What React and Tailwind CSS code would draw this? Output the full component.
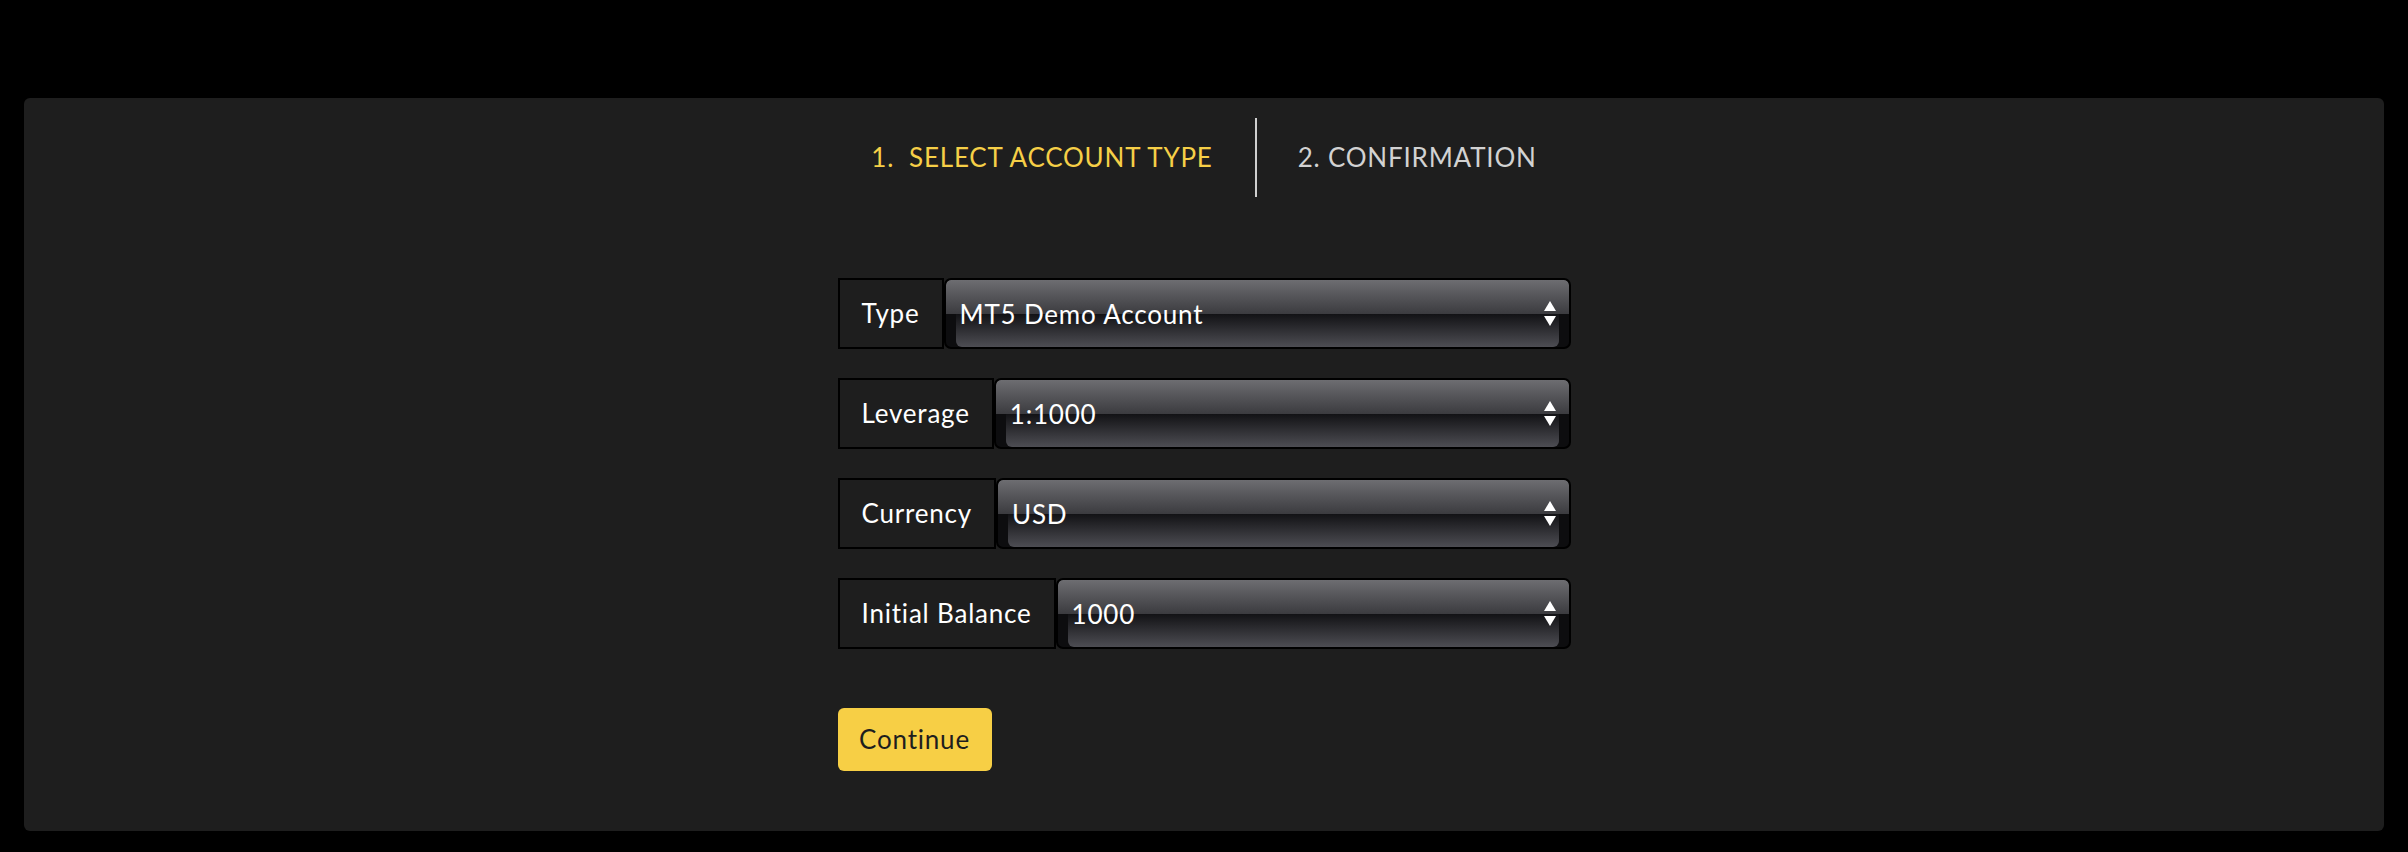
import React from 'react';

const rows = [
  { label: 'Type', value: 'MT5 Demo Account' },
  { label: 'Leverage', value: '1:1000' },
  { label: 'Currency', value: 'USD' },
  { label: 'Initial Balance', value: '1000' },
];

const Arrows = () => (
  <svg width="12" height="25" viewBox="0 0 12 25" className="shrink-0">
    <polygon points="6,0 12,10 0,10" fill="#ffffff" />
    <polygon points="0,15 12,15 6,25" fill="#ffffff" />
  </svg>
);

const GlossSelect = ({ value }) => (
  <div className="relative flex-1 h-full rounded-[7px] border-2 border-black bg-[#0d0d0f] overflow-hidden">
    {/* glossy background */}
    <div className="flex flex-col h-full">
      <div className="h-1/2 rounded-t-[5px] bg-[linear-gradient(to_bottom,#6d6d71,#3b3b3f)]" />
      <div className="h-1/2 mx-[10px] rounded-b-[6px] bg-[linear-gradient(to_bottom,#121215,#4d4d53)]" />
    </div>
    <div className="absolute inset-0 flex items-center justify-between pl-[14px] pr-[13px]">
      <span className="text-white text-[26px] tracking-[0.8px] leading-none">{value}</span>
      <Arrows />
    </div>
  </div>
);

export default function App() {
  return (
    <div className="min-h-screen bg-black pt-[98px] px-6 pb-[21px] font-['Lato','Liberation_Sans',sans-serif]">
      <div className="h-[733px] rounded-md bg-[#1e1e1e]">
        <div className="pt-5 flex justify-center items-center text-[26px] tracking-[0.8px]">
          <div className="pr-[42px] h-[79px] flex items-center text-[#f6cf47] whitespace-pre">
            1.  SELECT ACCOUNT TYPE
          </div>
          <div className="w-[2px] h-[79px] bg-[#cfcfcf]" />
          <div className="pl-[41px] h-[79px] flex items-center text-[#d2d2d2]">
            2. CONFIRMATION
          </div>
        </div>

        <div className="w-[733px] mx-auto">
          <div className="mt-[81px] flex flex-col gap-[29px]">
            {rows.map((row) => (
              <div key={row.label} className="flex h-[71px]">
                <div className="border-2 border-black px-[22px] flex items-center text-white text-[26px] tracking-[0.8px]">
                  {row.label}
                </div>
                <GlossSelect value={row.value} />
              </div>
            ))}
          </div>

          <button className="mt-[59px] h-[63px] w-[154px] rounded-md bg-[#f7cf45] text-[#1e1e1e] text-[26px] tracking-[0.8px]">
            Continue
          </button>
        </div>
      </div>
    </div>
  );
}
